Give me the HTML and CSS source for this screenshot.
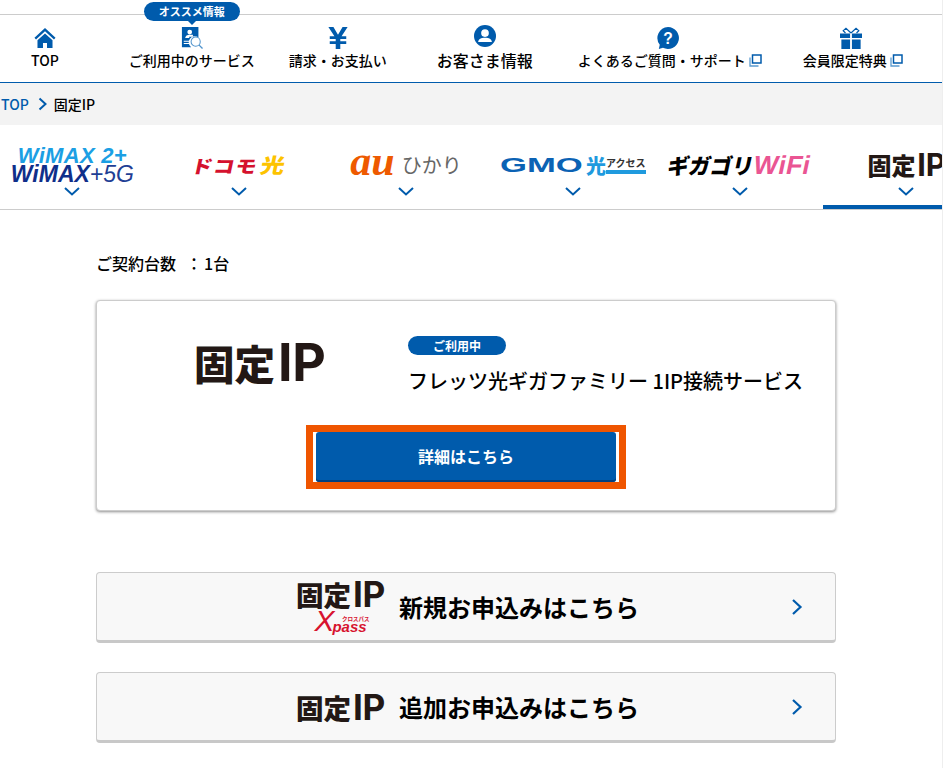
FILE: index.html
```html
<!DOCTYPE html>
<html lang="ja">
<head>
<meta charset="utf-8">
<title>固定IP</title>
<link rel="stylesheet" href="styles.css">
</head>
<body>
<div class="page">
  <nav class="gnav">
    <a class="gnav-item">
      <svg class="gicon" viewBox="0 0 24 24"><path d="M12 1 0.500 11.800l1.700 1.700L12 4.500l9.800 9 1.700-1.700z"/><path d="M12 7 3.800 14.500v8.500h6v-5.500h4.400V23h6v-8.500z"/></svg>
      <span>TOP</span>
    </a>
    <a class="gnav-item gap-a">
      <span class="bubble">オススメ情報</span>
      <svg class="gicon" viewBox="0 0 24 24"><path d="M1 0h18v11.500A6.500 6.500 0 0 0 11 22H1z"/><circle cx="9.500" cy="5.500" r="2.600" fill="#fff"/><path d="M4.500 13c0-3.500 2.500-4.500 5-4.500h3.500v2H9v1.500H4.500zM3 15h7v1H3zM3 17.500h7v1H3z" fill="#fff"/><circle cx="16" cy="16" r="5" fill="#fff" stroke="#4f93cc" stroke-width="1.100"/><path d="m19.500 19.500 4 4" stroke="#4f93cc" stroke-width="1.500"/></svg>
      <span>ご利用中のサービス</span>
    </a>
    <a class="gnav-item gap-b">
      <svg class="gicon" viewBox="0 0 24 24"><path d="M1.500 0H7l5 8.500L17 0h5.500l-6.600 10H21v3h-6.500v2.500H21v3h-6.500V24h-5v-5.500H3v-3h6.500V13H3v-3h5.100z"/></svg>
      <span>請求・お支払い</span>
    </a>
    <a class="gnav-item gap-c big">
      <svg class="gicon" viewBox="0 0 24 24"><circle cx="12" cy="12" r="12"/><circle cx="12" cy="8.800" r="4.200" fill="#fff"/><path d="M4.500 18.500c.5-3.700 3-4.700 7.500-4.700s7 1 7.500 4.700z" fill="#fff"/></svg>
      <span>お客さま情報</span>
    </a>
    <a class="gnav-item gap-d has-ext">
      <svg class="gicon" viewBox="0 0 24 24"><path d="M12 0a12 12 0 1 1-5.500 22.700L2 24l1-4.700A12 12 0 0 1 12 0z"/><text class="qmark" x="12" y="18.500" text-anchor="middle">?</text></svg>
      <span class="ext">よくあるご質問・サポート<svg class="exticon" viewBox="0 0 13 13"><path class="back" d="M1 3.500V12h8.500"/><rect class="front" x="3.500" y="1" width="8.500" height="8"/></svg></span>
    </a>
    <a class="gnav-item gap-e has-ext">
      <svg class="gicon" viewBox="0 0 24 24"><path d="M0 7h11v5H0zM13 7h11v5H13zM1.500 13.500H11V24H1.500zM13 13.500h9.500V24H13z"/><path d="M12 6.500 6.500 1.500 3.500 4l2.500 2.500M12 6.500l5.500-5 3 2.500-2.500 2.500" fill="none" stroke="#005bac" stroke-width="1.300"/></svg>
      <span class="ext">会員限定特典<svg class="exticon" viewBox="0 0 13 13"><path class="back" d="M1 3.500V12h8.500"/><rect class="front" x="3.500" y="1" width="8.500" height="8"/></svg></span>
    </a>
  </nav>

  <div class="crumbs">
    <a class="crumb-link">TOP</a>
    <svg class="crumb-sep" viewBox="0 0 9 14"><path d="m1.500 1.500 6 5.500-6 5.500"/></svg>
    <span>固定IP</span>
  </div>

  <div class="tabs">
    <a class="tab">
      <span class="logo wimax"><span class="wx-a">WiMAX 2+</span><span class="wx-b">WiMAX<i>+5G</i></span></span>
      <svg class="tab-chev" viewBox="0 0 16 9"><path d="m1 1 7 6.500L15 1"/></svg>
    </a>
    <a class="tab">
      <span class="logo docomo">ドコモ<b>光</b></span>
      <svg class="tab-chev" viewBox="0 0 16 9"><path d="m1 1 7 6.500L15 1"/></svg>
    </a>
    <a class="tab">
      <span class="logo auh"><b>au</b>ひかり</span>
      <svg class="tab-chev" viewBox="0 0 16 9"><path d="m1 1 7 6.500L15 1"/></svg>
    </a>
    <a class="tab">
      <span class="logo gmo"><span class="gmo-word">GMO</span><b>光</b><small>アクセス</small></span>
      <svg class="tab-chev" viewBox="0 0 16 9"><path d="m1 1 7 6.500L15 1"/></svg>
    </a>
    <a class="tab">
      <span class="logo giga">ギガゴリ<b>WiFi</b></span>
      <svg class="tab-chev" viewBox="0 0 16 9"><path d="m1 1 7 6.500L15 1"/></svg>
    </a>
    <a class="tab active">
      <span class="logo kotei kotei-tab"><span>固定</span><span class="ip">IP</span></span>
      <svg class="tab-chev" viewBox="0 0 16 9"><path d="m1 1 7 6.500L15 1"/></svg>
    </a>
  </div>

  <main class="content">
    <p class="count">ご契約台数<span class="count-sep">：</span>1台</p>
    <section class="card">
      <div class="card-head">
        <div class="card-logo"><span class="logo kotei kotei-big"><span>固定</span><span class="ip">IP</span></span></div>
        <div class="card-info">
          <span class="status">ご利用中</span>
          <p class="plan">フレッツ光ギガファミリー 1IP接続サービス</p>
        </div>
      </div>
      <div class="focus-ring"><a class="detail-btn">詳細はこちら</a></div>
    </section>

    <a class="apply apply-first">
      <span class="apply-logo">
        <span class="logo kotei kotei-row"><span>固定</span><span class="ip">IP</span></span>
        <span class="xpass"><i>X</i><span class="xp">pass</span><small>クロスパス</small></span>
      </span>
      <span class="apply-text">新規お申込みはこちら</span>
      <svg class="apply-chev" viewBox="0 0 12 18"><path d="m2 2 7.500 7L2 16"/></svg>
    </a>
    <a class="apply">
      <span class="apply-logo">
        <span class="logo kotei kotei-row"><span>固定</span><span class="ip">IP</span></span>
      </span>
      <span class="apply-text">追加お申込みはこちら</span>
      <svg class="apply-chev" viewBox="0 0 12 18"><path d="m2 2 7.500 7L2 16"/></svg>
    </a>
  </main>
</div>
</body>
</html>
```
FILE: styles.css
```css
* { box-sizing: border-box; }
html, body { margin: 0; padding: 0; background: #fff; }
body {
  font-family: "Noto Sans CJK JP", "Noto Sans", sans-serif;
  color: #000;
  overflow: hidden;
  height: 768px;
}
a { color: inherit; text-decoration: none; }
p { margin: 0; }
.page { width: 943px; height: 768px; overflow: hidden; border-right: 1px solid #eee; }

.gnav {
  margin-top: 14px;
  height: 69px;
  border-top: 1px solid #ccc;
  border-bottom: 1px solid #005bac;
  display: flex;
  padding-left: 31px;
}
.gnav-item {
  position: relative;
  display: flex;
  flex-direction: column;
  align-items: center;
  font-size: 14px;
  font-weight: 500;
  line-height: 20px;
  padding-top: 12px;
  white-space: nowrap;
}
.gnav-item .gicon { width: 22px; height: 22px; fill: #005bac; margin-bottom: 1px; flex: none; }
.gnav-item.big { font-size: 16px; padding-top: 10px; }
.gnav-item.big .gicon { margin-bottom: 3px; }
.has-ext .gicon { margin-right: 3px; }
.gap-a { margin-left: 70px; }
.gap-b { margin-left: 34px; }
.gap-c { margin-left: 50px; }
.gap-d { margin-left: 45px; }
.gap-e { margin-left: 41px; }
.ext { display: flex; align-items: center; }
.exticon { width: 13px; height: 13px; margin-left: 3px; fill: none; }
.exticon .back { stroke: #5b9bd0; stroke-width: 1.300; fill: none; }
.exticon .front { stroke: #005bac; stroke-width: 1.500; fill: #fff; }
.qmark { fill: #fff; font: 700 17px "Liberation Sans", sans-serif; }

.bubble {
  position: absolute;
  top: -13px;
  left: 50%;
  transform: translateX(-50%);
  width: 96px;
  height: 19px;
  border-radius: 10px;
  background: #005bac;
  color: #fff;
  font-size: 11px;
  font-weight: 700;
  line-height: 19px;
  text-align: center;
}
.bubble::after {
  content: "";
  position: absolute;
  left: 50%;
  bottom: -4px;
  margin-left: -4px;
  border-left: 4px solid transparent;
  border-right: 4px solid transparent;
  border-top: 4px solid #005bac;
}

.crumbs {
  height: 42px;
  background: #f3f3f3;
  display: flex;
  align-items: center;
  padding-left: 1px;
  font-size: 14px;
  font-weight: 500;
}
.crumb-link { color: #005bac; }
.crumb-sep { width: 9px; height: 14px; margin: 0 7px 0 9px; fill: none; stroke: #005bac; stroke-width: 2; }

.tabs {
  height: 85px;
  border-bottom: 1px solid #ccc;
  display: flex;
  margin-left: -11px;
  width: 953px;
  overflow: hidden;
}
.tab {
  width: 166.800px;
  flex: none;
  position: relative;
  display: flex;
  flex-direction: column;
  align-items: center;
  justify-content: flex-end;
  white-space: nowrap;
}
.tab-chev { width: 16px; height: 9px; fill: none; stroke: #005bac; stroke-width: 2; margin-bottom: 13px; flex: none; }
.tab.active { border-bottom: 4px solid #005bac; }
.tab.active .tab-chev { margin-bottom: 9px; }
.logo { display: block; }

.wimax { display: flex; flex-direction: column; align-items: center; font-family: "Liberation Sans", sans-serif; font-weight: 700; font-style: italic; line-height: 19px; margin-bottom: 3px; }
.wx-a { color: #1c9fe4; font-size: 22px; letter-spacing: .3px; }
.wx-b { color: #0f2f8a; font-size: 23px; white-space: nowrap; }
.wx-b i { font-weight: 400; color: #1f3f95; }

.docomo { font-weight: 900; font-size: 21px; line-height: 32px; letter-spacing: 1px; color: #d5112e; transform: skewX(-12deg) scaleY(.85); margin-bottom: 6px; }
.docomo b { color: #fdc300; font-weight: 900; font-size: 24px; margin-left: 3px; }

.auh { font-size: 20px; line-height: 32px; color: #666; margin-bottom: 6px; }
.auh b { font: italic 700 42px/32px "Liberation Serif", serif; color: #ee5a00; margin-right: 7px; vertical-align: -2px; }

.gmo { display: flex; align-items: center; height: 32px; margin-bottom: 6px; color: #333; font-weight: 700; }
.gmo-word { display: block; width: 86px; font: 900 21px/32px "Liberation Sans", sans-serif; color: #0b62b4; transform: scaleX(1.650); transform-origin: left center; }
.gmo b { color: #1f9ade; font-size: 20px; font-weight: 900; }
.gmo small { font-size: 10px; color: #333; border-bottom: 4px solid #1f9ade; line-height: 14px; }

.giga { font-weight: 900; font-size: 21.500px; line-height: 32px; color: #000; transform: skewX(-12deg); margin-bottom: 6px; }
.giga b { color: #ea5593; font-weight: 900; font-size: 26px; letter-spacing: .5px; font-family: "Liberation Sans", sans-serif; }

.kotei { display: inline-flex; align-items: center; font-weight: 900; color: #231815; white-space: nowrap; }
.kotei .ip { font-family: Inter, "Liberation Sans", sans-serif; font-weight: 700; font-size: 1.280em; letter-spacing: -.01em; margin-left: .06em; }
.kotei-tab { font-size: 24px; line-height: 32px; margin-bottom: 6px; }
.kotei-big { font-size: 40.500px; line-height: 60px; }
.kotei-row { font-size: 27.500px; line-height: 28px; }

.content { width: 740px; margin-left: 96px; padding-top: 41px; }
.count { font-size: 16px; font-weight: 500; line-height: 24px; }
.count-sep { margin: 0 2px 0 10px; }
.card {
  margin-top: 25px;
  height: 211px;
  border: 1px solid #ccc;
  border-radius: 4px;
  box-shadow: 0 1px 3px rgba(0,0,0,.45);
  background: #fff;
  display: flex;
  flex-direction: column;
  align-items: center;
}
.card-head { width: 100%; height: 124px; display: flex; flex: none; }
.card-logo { width: 311px; padding: 32px 0 0 97px; flex: none; }
.card-info { padding-top: 35px; }
.status {
  display: block;
  width: 98px;
  height: 19px;
  border-radius: 10px;
  background: #005bac;
  color: #fff;
  font-size: 12px;
  font-weight: 700;
  line-height: 19px;
  text-align: center;
}
.plan { font-size: 20px; font-weight: 500; line-height: 28px; margin-top: 12px; white-space: nowrap; }
.focus-ring {
  width: 320px;
  height: 64px;
  border: 7px solid #ef5500;
  padding: 0 3px;
  background: #fff;
}
.detail-btn {
  display: block;
  height: 50px;
  border-radius: 3px;
  background: #005bac;
  box-shadow: inset 0 -2px 0 #004080;
  color: #fff;
  font-size: 16px;
  font-weight: 700;
  line-height: 48px;
  text-align: center;
}

.apply {
  margin-top: 29px;
  height: 71px;
  background: #f8f8f8;
  border: 1px solid #ccc;
  border-bottom: 3px solid #c8c8c8;
  border-radius: 4px;
  display: flex;
  align-items: center;
  position: relative;
}
.apply-first { margin-top: 61px; }
.apply-logo { width: 302px; display: flex; flex-direction: column; align-items: flex-end; flex: none; padding-right: 14px; }
.xpass { position: relative; display: flex; justify-content: center; align-items: flex-end; width: 89px; height: 24px; margin-top: 1px; font: italic 700 15px/12px "Liberation Sans", sans-serif; color: #d7132f; }
.xpass i { font-size: 30px; font-weight: 400; line-height: 24px; margin-right: -2px; }
.xpass small { position: absolute; left: 46px; top: 7px; font: 700 5.500px/6px "Noto Sans CJK JP", sans-serif; }
.apply-text { font-size: 24px; font-weight: 700; line-height: 32px; }
.apply-chev { position: absolute; right: 32px; top: 50%; margin-top: -9px; width: 12px; height: 18px; fill: none; stroke: #005bac; stroke-width: 2.200; }
```
